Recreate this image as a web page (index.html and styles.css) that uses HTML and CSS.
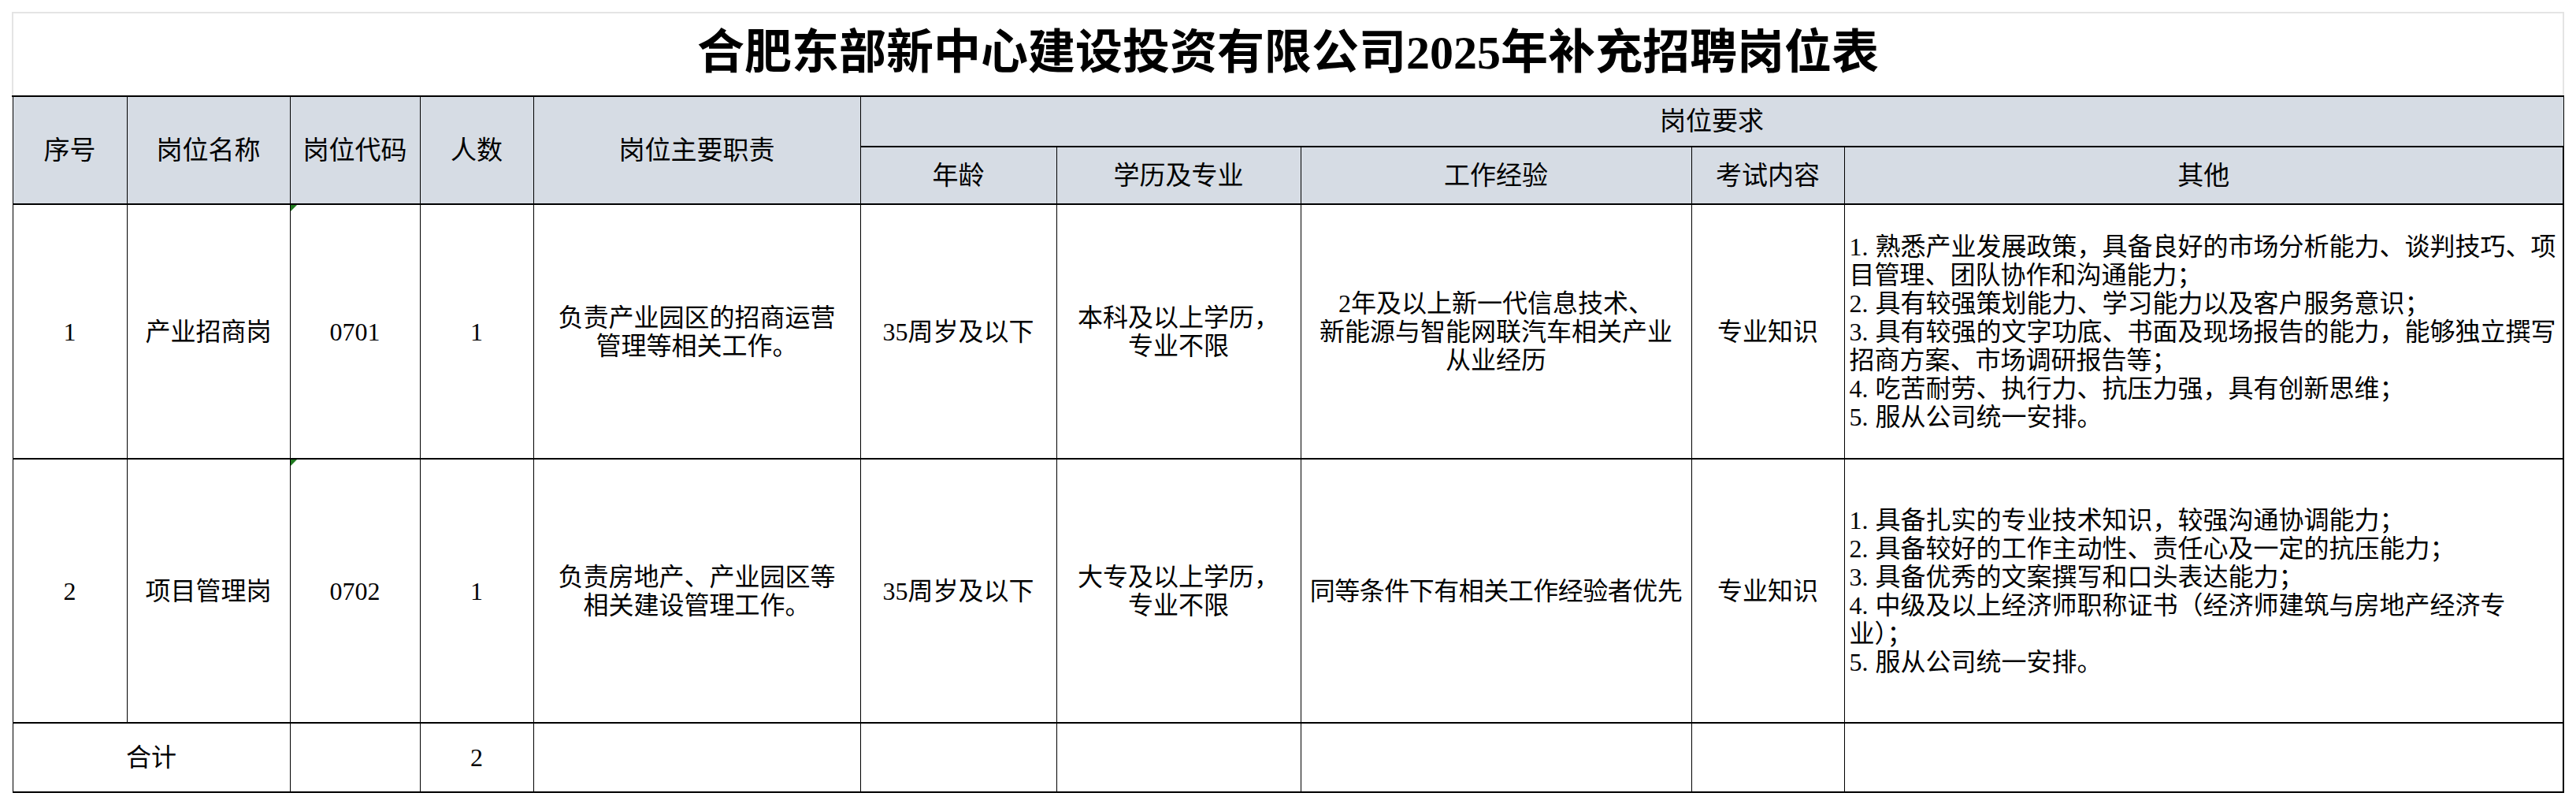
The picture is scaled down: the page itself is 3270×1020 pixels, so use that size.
FILE: index.html
```html
<!DOCTYPE html>
<html lang="zh-CN">
<head>
<meta charset="utf-8">
<title>合肥东部新中心建设投资有限公司2025年补充招聘岗位表</title>
<link rel="stylesheet" href="styles.css">
</head>
<body>
<div class="page">
  <table class="sheet">
    <colgroup>
      <col class="c-no">
      <col class="c-name">
      <col class="c-code">
      <col class="c-num">
      <col class="c-duty">
      <col class="c-age">
      <col class="c-edu">
      <col class="c-exp">
      <col class="c-exam">
      <col class="c-other">
    </colgroup>
    <tr class="r-title">
      <td colspan="10" class="title">合肥东部新中心建设投资有限公司2025年补充招聘岗位表</td>
    </tr>
    <tr class="r-h1">
      <th rowspan="2">序号</th>
      <th rowspan="2">岗位名称</th>
      <th rowspan="2">岗位代码</th>
      <th rowspan="2">人数</th>
      <th rowspan="2">岗位主要职责</th>
      <th colspan="5">岗位要求</th>
    </tr>
    <tr class="r-h2">
      <th>年龄</th>
      <th>学历及专业</th>
      <th>工作经验</th>
      <th>考试内容</th>
      <th class="last">其他</th>
    </tr>
    <tr class="r-1">
      <td>1</td>
      <td>产业招商岗</td>
      <td class="flag">0701</td>
      <td>1</td>
      <td>负责产业园区的招商运营<br>管理等相关工作。</td>
      <td>35周岁及以下</td>
      <td>本科及以上学历，<br>专业不限</td>
      <td>2年及以上新一代信息技术、<br>新能源与智能网联汽车相关产业<br>从业经历</td>
      <td>专业知识</td>
      <td class="other last"><span class="n">1.</span>熟悉产业发展政策，具备良好的市场分析能力、谈判技巧、项<br>目管理、团队协作和沟通能力；<br><span class="n">2.</span>具有较强策划能力、学习能力以及客户服务意识；<br><span class="n">3.</span>具有较强的文字功底、书面及现场报告的能力，能够独立撰写<br>招商方案、市场调研报告等；<br><span class="n">4.</span>吃苦耐劳、执行力、抗压力强，具有创新思维；<br><span class="n">5.</span>服从公司统一安排。</td>
    </tr>
    <tr class="r-2">
      <td>2</td>
      <td>项目管理岗</td>
      <td class="flag">0702</td>
      <td>1</td>
      <td>负责房地产、产业园区等<br>相关建设管理工作。</td>
      <td>35周岁及以下</td>
      <td>大专及以上学历，<br>专业不限</td>
      <td class="tight">同等条件下有相关工作经验者优先</td>
      <td>专业知识</td>
      <td class="other last"><span class="n">1.</span>具备扎实的专业技术知识，较强沟通协调能力；<br><span class="n">2.</span>具备较好的工作主动性、责任心及一定的抗压能力；<br><span class="n">3.</span>具备优秀的文案撰写和口头表达能力；<br><span class="n">4.</span>中级及以上经济师职称证书（经济师建筑与房地产经济专<br>业）；<br><span class="n">5.</span>服从公司统一安排。</td>
    </tr>
    <tr class="r-total">
      <td colspan="2">合计</td>
      <td></td>
      <td>2</td>
      <td></td>
      <td></td>
      <td></td>
      <td></td>
      <td></td>
      <td class="last"></td>
    </tr>
  </table>
</div>
</body>
</html>
```

FILE: styles.css
```css
html, body {
  margin: 0;
  padding: 0;
  background: #ffffff;
}

.page {
  padding: 15px 0 0 15px;
}

.sheet {
  border-collapse: collapse;
  table-layout: fixed;
  width: 3239px;
  font-family: "Liberation Serif", "Noto Sans CJK SC", serif;
  color: #000;
}

.c-no { width: 145px; }
.c-name { width: 207px; }
.c-code { width: 165px; }
.c-num { width: 144px; }
.c-duty { width: 415px; }
.c-age { width: 249px; }
.c-edu { width: 310px; }
.c-exp { width: 496px; }
.c-exam { width: 194px; }
.c-other { width: 913px; }

.sheet th,
.sheet td {
  border-left: 1px solid #000;
  border-right: 1px solid #000;
  border-top: 2px solid #000;
  border-bottom: 2px solid #000;
  padding: 0;
  text-align: center;
  vertical-align: middle;
  white-space: nowrap;
  font-size: 32px;
  line-height: 36px;
  font-weight: normal;
}

.sheet .last {
  border-right: 2px solid #000;
}

.sheet th {
  background: #d6dce4;
  font-size: 33px;
}

.r-title { height: 106px; }
.r-h1 { height: 64px; }
.r-h2 { height: 73px; }
.r-1 { height: 323px; }
.r-2 { height: 335px; }
.r-total { height: 88px; }

.sheet .title {
  border-top: 2px solid #e4e4e4;
  border-left: 2px solid #e4e4e4;
  border-right: 2px solid #e4e4e4;
  font-size: 60px;
  line-height: 70px;
  font-weight: bold;
  padding-bottom: 4px;
}

.sheet .other {
  text-align: left;
  padding-left: 6px;
}

.sheet .other .n {
  display: inline-block;
  width: 33px;
}

.sheet .tight {
  letter-spacing: -0.5px;
}

.sheet .flag {
  position: relative;
}

.sheet .flag::before {
  content: "";
  position: absolute;
  left: 0;
  top: 0;
  width: 0;
  height: 0;
  border-top: 8px solid #1f7a1f;
  border-right: 8px solid transparent;
}
```
